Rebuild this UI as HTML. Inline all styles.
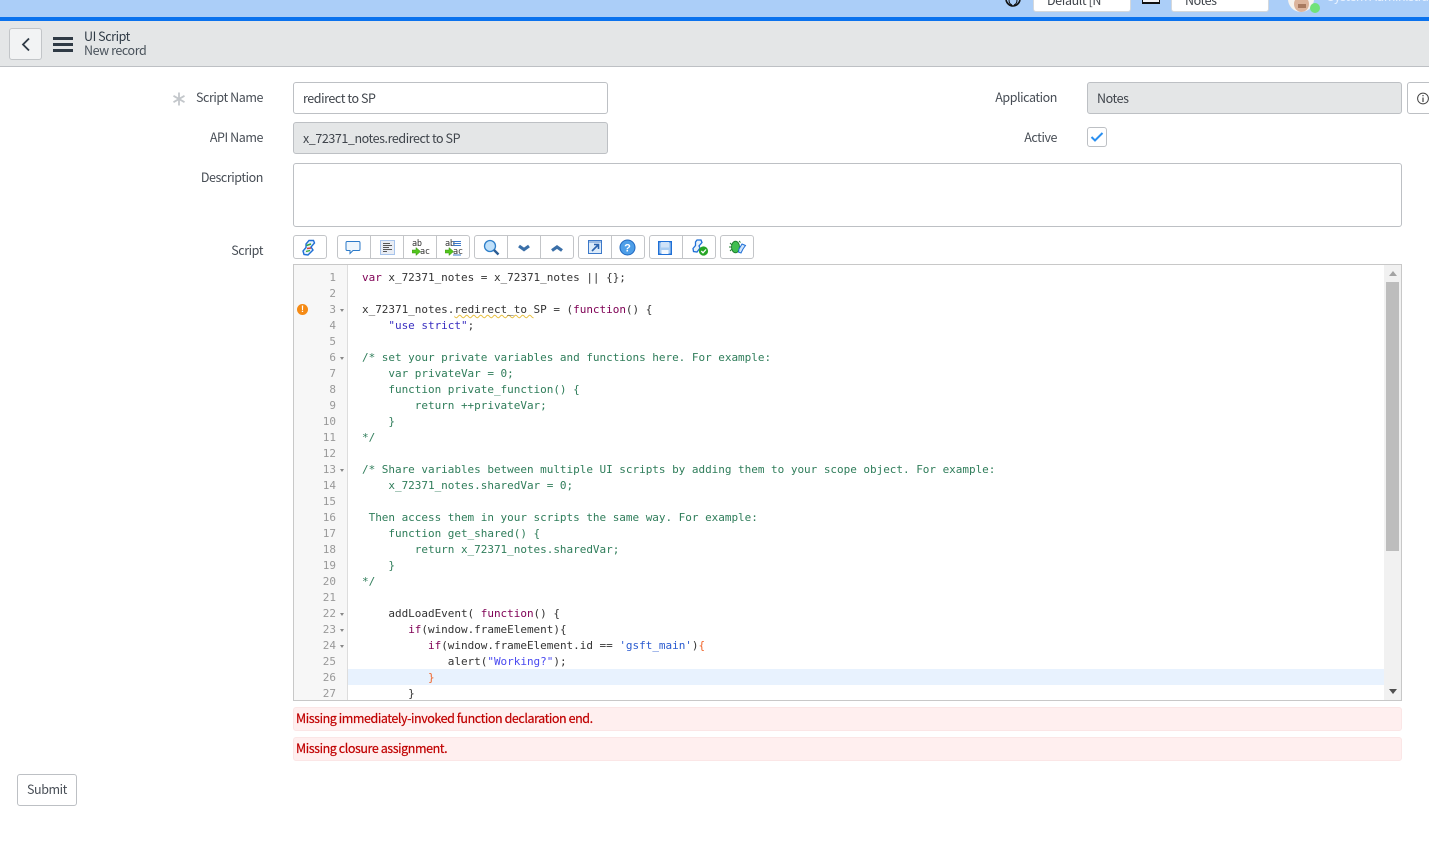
<!DOCTYPE html>
<html><head><meta charset="utf-8"><style>
html,body{margin:0;padding:0;width:1429px;height:853px;overflow:hidden;background:#fff}
body{position:relative;font-family:"Noto Sans CJK JP","Liberation Sans",sans-serif;font-size:12.5px;letter-spacing:-.43px;color:#4a5058}
.a{position:absolute;box-sizing:border-box}
.t{position:absolute;white-space:pre;line-height:16px}
.lbl{position:absolute;right:1166px;line-height:18px;white-space:pre;color:#474d55}
.inp{position:absolute;box-sizing:border-box;border:1px solid #bdc0c4;border-radius:3px;line-height:30px;padding-left:9px;color:#3f444b}
.ro{background:#e4e6e7}
.cl{position:absolute;left:362px;font:11px/16px "DejaVu Sans Mono",monospace;letter-spacing:-.025px;white-space:pre;color:#333}
.n{position:absolute;left:294px;width:42px;text-align:right;font:11px/16px "DejaVu Sans Mono",monospace;letter-spacing:-.025px;color:#999}
.k{color:#7f0055}.c{color:#2f7d5a}
.f{position:absolute;left:340px;width:0;height:0;border-left:2.5px solid transparent;border-right:2.5px solid transparent;border-top:3px solid #888}
.g{position:absolute;box-sizing:border-box;top:235px;height:24px;border:1px solid #c3c5c8;background:#fff;border-radius:3px}
.b{position:absolute;top:0;height:22px;border-left:1px solid #c3c5c8}
svg{position:absolute;display:block}
.err{position:absolute;box-sizing:border-box;left:293px;width:1109px;height:24px;background:#ffefef;border:1px solid #fbe6e6;border-radius:3px;color:#c00000;line-height:20px;padding-left:2px;white-space:pre;-webkit-text-stroke:.2px #c00000}
.m{position:absolute;font:8.5px/8px "DejaVu Sans Mono",monospace;letter-spacing:-.3px;color:#333;white-space:pre}
</style></head><body>
<div class="a" style="left:0;top:0;width:1429px;height:17px;background:#abcef8"></div>
<div class="a" style="left:0;top:17px;width:1429px;height:4px;background:#0a72ee"></div>
<div class="a" style="left:0;top:21px;width:1429px;height:46px;background:#e4e6e7;border-bottom:1px solid #bdc0c4"></div>

<div class="a" style="left:1033px;top:-8px;width:98px;height:20px;background:#fff;border-radius:3px;border:1px solid #d4d8dc;line-height:14px;padding-left:13px;color:#3f444b;overflow:hidden">Default [N</div>
<div class="a" style="left:1171px;top:-8px;width:98px;height:20px;background:#fff;border-radius:3px;border:1px solid #d4d8dc;line-height:14px;padding-left:13px;color:#3f444b;overflow:hidden">Notes</div>
<svg style="left:1005px;top:0" width="16" height="7"><path d="M1 0C2 4 5 6 8 6S14 4 15 0" fill="none" stroke="#111" stroke-width="1.6"/><path d="M4 0C4 3 5 4 7 5M12 0C12 3 11 4 9 5" fill="none" stroke="#111"/></svg>
<div class="a" style="left:1142px;top:-2px;width:18px;height:6px;background:#f4f4f8;border:1px solid #111;border-bottom-width:2px"></div>
<div class="a" style="left:1288px;top:-14px;width:26px;height:26px;border-radius:50%;background:#f6f3ef;overflow:hidden"><div class="a" style="left:6px;top:10px;width:15px;height:16px;border-radius:50%;background:#dcb49c"></div><div class="a" style="left:10px;top:18px;width:8px;height:4px;background:#a87a60"></div></div>
<div class="a" style="left:1310px;top:3px;width:10px;height:10px;border-radius:50%;background:#71e279"></div>
<div class="a" style="left:1327px;top:-11px;line-height:14px;color:#e9f2fe;white-space:pre">System Administrator</div>

<div class="a" style="left:9px;top:28px;width:33px;height:32px;background:#f2f3f4;border:1px solid #c2c5c8;border-radius:3px"></div>
<svg style="left:20px;top:37px" width="12" height="15"><path d="M9 1.5L3 7.5L9 13.5" fill="none" stroke="#2f3a45" stroke-width="1.8"/></svg>
<div class="a" style="left:53px;top:37px;width:20px;height:3px;background:#2f3a45"></div>
<div class="a" style="left:53px;top:43px;width:20px;height:3px;background:#2f3a45"></div>
<div class="a" style="left:53px;top:49px;width:20px;height:3px;background:#2f3a45"></div>
<div class="t" style="left:84px;top:28px;color:#2f3a45">UI Script</div>
<div class="t" style="left:84px;top:42px;color:#49525b">New record</div>

<svg style="left:171px;top:91px" width="16" height="16"><path d="M8 1.5V14.5M2.5 4.8L13.5 11.2M13.5 4.8L2.5 11.2" stroke="#c3c7cb" stroke-width="1.8"/></svg>
<div class="lbl" style="top:88px">Script Name</div>
<div class="lbl" style="top:128px">API Name</div>
<div class="lbl" style="top:168px">Description</div>
<div class="lbl" style="top:241px">Script</div>
<div class="lbl" style="top:88px;right:372px">Application</div>
<div class="lbl" style="top:128px;right:372px">Active</div>

<div class="inp" style="left:293px;top:82px;width:315px;height:32px">redirect to SP</div>
<div class="inp ro" style="left:293px;top:122px;width:315px;height:32px">x_72371_notes.redirect to SP</div>
<div class="inp ro" style="left:1087px;top:82px;width:315px;height:32px">Notes</div>
<div class="a" style="left:1407px;top:82px;width:40px;height:32px;border:1px solid #bdc0c4;border-radius:3px;background:#fff"></div>
<svg style="left:1417px;top:92px" width="12" height="13"><circle cx="6" cy="6.5" r="5.4" fill="none" stroke="#444" stroke-width="1"/><path d="M6 5.5V10M6 3V4.3" stroke="#444" stroke-width="1.2"/></svg>
<div class="a" style="left:1087px;top:127px;width:20px;height:20px;border:1px solid #bdc0c4;border-radius:3px;background:#fff"></div>
<svg style="left:1090px;top:131px" width="14" height="12"><path d="M1.5 6L5 9.5L12.5 2" fill="none" stroke="#2a8ff0" stroke-width="2"/></svg>
<div class="inp" style="left:293px;top:163px;width:1109px;height:64px"></div>

<div class="g" style="left:293px;width:34px"></div>
<div class="g" style="left:337px;width:133px"><div class="b" style="left:32px"></div><div class="b" style="left:65px"></div><div class="b" style="left:98px"></div></div>
<div class="g" style="left:474px;width:100px"><div class="b" style="left:32px"></div><div class="b" style="left:65px"></div></div>
<div class="g" style="left:578px;width:67px"><div class="b" style="left:32px"></div></div>
<div class="g" style="left:649px;width:67px"><div class="b" style="left:32px"></div></div>
<div class="g" style="left:720px;width:34px"></div>

<svg style="left:301px;top:239px" width="15" height="18"><path d="M8 1.5L12.5 1.5L13.5 4L10 8L12 11L7 16L3 15.5L2 12L5 8.5L5 5Z" fill="#e6f1fc" stroke="#1f6fd6" stroke-width="1.4"/><path d="M5.5 6.5L10 5" stroke="#37a637" stroke-width="1.5"/><path d="M6 9.5L10 9" stroke="#d23c3c" stroke-width="1.4"/><path d="M5 12.5L9 11.5" stroke="#37a637" stroke-width="1.4"/></svg>
<svg style="left:345px;top:240px" width="16" height="15"><path d="M2 1.5H14Q15 1.5 15 3V9Q15 10.5 14 10.5H8L5 13.5V10.5H2Q1 10.5 1 9V3Q1 1.5 2 1.5Z" fill="#eef6fd" stroke="#2c7ac9"/></svg>
<svg style="left:380px;top:240px" width="15" height="15"><rect x=".5" y=".5" width="14" height="14" fill="#e9edf4" stroke="#a7c4ec"/><path d="M3 3.5H10M3 5.5H12M3 7.5H9M3 9.5H12M3 11.5H7" stroke="#555"/></svg>
<div class="m" style="left:412px;top:240px">ab</div>
<div class="m" style="left:420px;top:248px">ac</div>
<svg style="left:412px;top:247px" width="9" height="9"><path d="M0 3H4V0.5L8.5 4.5L4 8.5V6H0Z" fill="#52c61e" stroke="#3a8f12" stroke-width=".5"/></svg>
<div class="m" style="left:445px;top:240px">ab</div>
<div class="m" style="left:453px;top:248px">ac</div>
<svg style="left:445px;top:247px" width="9" height="9"><path d="M0 3H4V0.5L8.5 4.5L4 8.5V6H0Z" fill="#52c61e" stroke="#3a8f12" stroke-width=".5"/></svg>
<svg style="left:453px;top:240px" width="9" height="16"><path d="M0 1.5H8M0 3.5H8M0 5.5H8M0 15H8" stroke="#3b78c9"/></svg>
<svg style="left:483px;top:239px" width="17" height="17"><circle cx="7" cy="7" r="5.5" fill="#bfe0fa" stroke="#2e7fc9" stroke-width="1.3"/><path d="M11 11L15.5 15.5" stroke="#2b5d94" stroke-width="2.4"/></svg>
<svg style="left:517px;top:244px" width="14" height="9"><path d="M2 2L7 5.5L12 2" fill="none" stroke="#3a6fa8" stroke-width="3.2"/></svg>
<svg style="left:550px;top:244px" width="14" height="9"><path d="M2 6.5L7 3L12 6.5" fill="none" stroke="#3a6fa8" stroke-width="3.2"/></svg>
<svg style="left:588px;top:240px" width="15" height="15"><rect x=".5" y=".5" width="13" height="13" fill="#dcebfa" stroke="#3b78c9"/><path d="M1 1H13V3H1Z" fill="#9dbce3"/><path d="M4 11L10 5M6 4.5H10.5V9" fill="none" stroke="#2a62ad" stroke-width="1.6"/></svg>
<svg style="left:619px;top:239px" width="17" height="17"><circle cx="8.5" cy="8.5" r="7.5" fill="#4d9ee8" stroke="#1e66bf"/><text x="8.5" y="12.5" text-anchor="middle" font-family="Liberation Sans" font-weight="bold" font-size="11" letter-spacing="0" fill="#fff">?</text></svg>
<svg style="left:658px;top:241px" width="15" height="15"><rect x=".7" y=".7" width="12.6" height="12.6" fill="#a9cdf2" stroke="#1e6fd6" stroke-width="1.4"/><rect x="3" y="1" width="8" height="5.5" fill="#cfe3f8"/><rect x="3.5" y="9" width="7" height="4" fill="#f4f9ff"/></svg>
<svg style="left:691px;top:238px" width="18" height="19"><path d="M6 2L10 2L11 4.5L8 8L9 10L6 14L2.5 13.5L2 10.5L4.5 7.5L4.5 4Z" fill="#e6f1fc" stroke="#1f6fd6" stroke-width="1.3"/><circle cx="12.5" cy="13" r="4.6" fill="#25a525"/><path d="M10.3 13L12 14.8L15 11.5" fill="none" stroke="#fff" stroke-width="1.3"/></svg>
<svg style="left:729px;top:238px" width="18" height="18"><ellipse cx="6.5" cy="9" rx="4" ry="5.8" fill="#3fbf4f" stroke="#1f7f2f"/><path d="M1 5L3 7M1 13L3 11M0 9H2.5M10 3L11.5 4.5" stroke="#1f7f2f"/><path d="M13 6L16.5 7.5L14 11L12 15L9.5 14L10 11Z" fill="#cfe4fa" stroke="#1f6fd6"/></svg>

<div class="a" style="left:293px;top:264px;width:1109px;height:437px;border:1px solid #c8c8c8;background:#fff;overflow:hidden"></div>
<div class="a" style="left:294px;top:265px;width:54px;height:435px;background:#f7f7f7;border-right:1px solid #ddd"></div>
<div class="a" style="left:348px;top:669px;width:1036px;height:16px;background:#e8f2fe"></div>
<div class="a" style="left:1384px;top:265px;width:17px;height:435px;background:#f1f1f1"></div>
<div class="a" style="left:1386px;top:282px;width:13px;height:269px;background:#bdbdbd"></div>
<div class="a" style="left:1389px;top:271px;width:0;height:0;border-left:4px solid transparent;border-right:4px solid transparent;border-bottom:5px solid #a3a3a3"></div>
<div class="a" style="left:1389px;top:689px;width:0;height:0;border-left:4px solid transparent;border-right:4px solid transparent;border-top:5px solid #505050"></div>
<div class="a" style="left:297px;top:304px;width:11px;height:11px;border-radius:50%;background:#f58a14;color:#fff;font:bold 9px/11px 'Liberation Sans',sans-serif;letter-spacing:0;text-align:center">!</div>

<div class="n" style="top:270px">1</div><div class="n" style="top:286px">2</div><div class="n" style="top:302px">3</div><div class="n" style="top:318px">4</div><div class="n" style="top:334px">5</div><div class="n" style="top:350px">6</div><div class="n" style="top:366px">7</div><div class="n" style="top:382px">8</div><div class="n" style="top:398px">9</div><div class="n" style="top:414px">10</div><div class="n" style="top:430px">11</div><div class="n" style="top:446px">12</div><div class="n" style="top:462px">13</div><div class="n" style="top:478px">14</div><div class="n" style="top:494px">15</div><div class="n" style="top:510px">16</div><div class="n" style="top:526px">17</div><div class="n" style="top:542px">18</div><div class="n" style="top:558px">19</div><div class="n" style="top:574px">20</div><div class="n" style="top:590px">21</div><div class="n" style="top:606px">22</div><div class="n" style="top:622px">23</div><div class="n" style="top:638px">24</div><div class="n" style="top:654px">25</div><div class="n" style="top:670px">26</div><div class="n" style="top:686px;height:14px;overflow:hidden">27</div>
<div class="f" style="top:309px"></div><div class="f" style="top:357px"></div><div class="f" style="top:469px"></div><div class="f" style="top:613px"></div><div class="f" style="top:629px"></div><div class="f" style="top:645px"></div>

<div class="cl" style="top:270px"><span class="k">var</span> x_72371_notes = x_72371_notes || {};</div>
<div class="cl" style="top:302px">x_72371_notes.<span style="text-decoration:underline wavy #e8c040 1px;text-underline-offset:1px">redirect_to </span>SP = (<span class="k">function</span>() {</div>
<div class="cl" style="top:318px">    <span style="color:#3a2fc0">"use strict"</span>;</div>
<div class="cl c" style="top:350px">/* set your private variables and functions here. For example:</div>
<div class="cl c" style="top:366px">    var privateVar = 0;</div>
<div class="cl c" style="top:382px">    function private_function() {</div>
<div class="cl c" style="top:398px">        return ++privateVar;</div>
<div class="cl c" style="top:414px">    }</div>
<div class="cl c" style="top:430px">*/</div>
<div class="cl c" style="top:462px">/* Share variables between multiple UI scripts by adding them to your scope object. For example:</div>
<div class="cl c" style="top:478px">    x_72371_notes.sharedVar = 0;</div>
<div class="cl c" style="top:510px"> Then access them in your scripts the same way. For example:</div>
<div class="cl c" style="top:526px">    function get_shared() {</div>
<div class="cl c" style="top:542px">        return x_72371_notes.sharedVar;</div>
<div class="cl c" style="top:558px">    }</div>
<div class="cl c" style="top:574px">*/</div>
<div class="cl" style="top:606px">    addLoadEvent( <span class="k">function</span>() {</div>
<div class="cl" style="top:622px">       <span class="k">if</span>(window.frameElement){</div>
<div class="cl" style="top:638px">          <span class="k">if</span>(window.frameElement.id == <span style="color:#2a5bd0">'gsft_main'</span>)<span style="color:#f0642a">{</span></div>
<div class="cl" style="top:654px">             alert(<span style="color:#4a4af0">"Working?"</span>);</div>
<div class="cl" style="top:670px">          <span style="color:#f0642a">}</span></div>
<div class="cl" style="top:686px;height:14px;overflow:hidden">       }</div>

<div class="err" style="top:707px">Missing immediately-invoked function declaration end.</div>
<div class="err" style="top:737px">Missing closure assignment.</div>
<div class="a" style="left:17px;top:774px;width:60px;height:32px;border:1px solid #bdc0c4;border-radius:3px;background:#fff;text-align:center;line-height:28px;color:#474d55">Submit</div>
</body></html>
